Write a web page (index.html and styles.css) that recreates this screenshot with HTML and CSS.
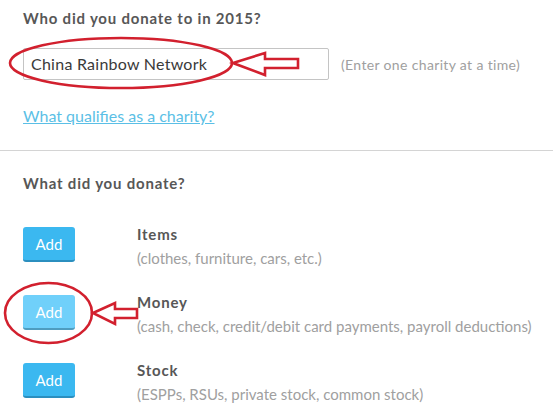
FILE: index.html
```html
<!DOCTYPE html>
<html>
<head>
<meta charset="utf-8">
<link rel="stylesheet" href="styles.css">
</head>
<body>
<div class="page">
  <section class="sec sec-top">
    <h2 class="q">Who did you donate to in 2015?</h2>
    <div class="field-row">
      <div class="input">China Rainbow Network</div>
      <span class="hint">(Enter one charity at a time)</span>
    </div>
    <a class="link" href="#">What qualifies as a charity?</a>
  </section>
  <hr class="divider">
  <section class="sec sec-bottom">
    <h2 class="q">What did you donate?</h2>
    <div class="rows">
      <div class="row">
        <button class="btn">Add</button>
        <div class="info">
          <div class="label">Items</div>
          <div class="sub">(clothes, furniture, cars, etc.)</div>
        </div>
      </div>
      <div class="row">
        <button class="btn btn-hover">Add</button>
        <div class="info">
          <div class="label">Money</div>
          <div class="sub">(cash, check, credit/debit card payments, payroll deductions)</div>
        </div>
      </div>
      <div class="row">
        <button class="btn">Add</button>
        <div class="info">
          <div class="label">Stock</div>
          <div class="sub">(ESPPs, RSUs, private stock, common stock)</div>
        </div>
      </div>
    </div>
  </section>
  <svg class="annot" width="553" height="420" viewBox="0 0 553 420">
    <g fill="none" stroke="#d2202e" stroke-width="2.6" stroke-linejoin="miter">
      <ellipse cx="121" cy="63" rx="111" ry="25"/>
      <polygon points="233,63 265,53 265,59 298,59 298,68 265,68 265,75"/>
      <ellipse cx="48.5" cy="313" rx="43.5" ry="30"/>
      <polygon points="93,313 115,303 115,309 137,309 137,318 115,318 115,324"/>
    </g>
  </svg>
</div>
</body>
</html>
```
FILE: styles.css
```css
html, body {
  margin: 0;
  padding: 0;
  background: #ffffff;
}
.page {
  position: relative;
  width: 553px;
  height: 420px;
  overflow: hidden;
  font-family: Lato, "Open Sans", sans-serif;
  color: #555555;
}
.sec {
  padding-left: 23px;
}
.sec-top {
  padding-top: 8px;
}
.q {
  margin: 0;
  font-size: 15px;
  line-height: 20px;
  font-weight: 700;
  letter-spacing: 0.8px;
  color: #575757;
}
.field-row {
  display: flex;
  align-items: center;
  margin-top: 20px;
}
.input {
  box-sizing: border-box;
  width: 306px;
  height: 32px;
  border: 1px solid #c4c4c4;
  border-radius: 2px;
  padding-left: 7px;
  font-size: 16px;
  line-height: 30px;
  letter-spacing: 0.25px;
  color: #3a3a3a;
}
.hint {
  margin-left: 12px;
  font-size: 14px;
  letter-spacing: 0.35px;
  color: #a0a0a0;
}
.link {
  display: block;
  width: max-content;
  margin-top: 26px;
  font-size: 16px;
  line-height: 20px;
  color: #5bbfe6;
  text-decoration: underline;
}
.divider {
  margin: 24px 0 0 0;
  border: 0;
  border-top: 1px solid #d4d4d4;
  height: 0;
}
.sec-bottom {
  padding-top: 22px;
}
.rows {
  display: flex;
  flex-direction: column;
  gap: 25px;
  margin-top: 31px;
}
.row {
  display: flex;
  align-items: flex-start;
}
.btn {
  box-sizing: border-box;
  width: 52px;
  height: 35px;
  margin-top: 3px;
  border: 0;
  border-bottom: 2px solid #2b8fbf;
  border-radius: 3px;
  background: #3bb8f0;
  color: #ffffff;
  font-family: Lato, "Open Sans", sans-serif;
  font-size: 15px;
  padding: 0;
}
.btn-hover {
  background: #70d0fa;
  border-bottom-color: #4e9dc0;
}
.info {
  margin-left: 62px;
}
.label {
  font-size: 15px;
  line-height: 20px;
  font-weight: 700;
  letter-spacing: 0.8px;
  color: #575757;
}
.sub {
  margin-top: 5px;
  font-size: 15px;
  line-height: 18px;
  color: #a0a0a0;
}
.annot {
  position: absolute;
  left: 0;
  top: 0;
  pointer-events: none;
}
```
